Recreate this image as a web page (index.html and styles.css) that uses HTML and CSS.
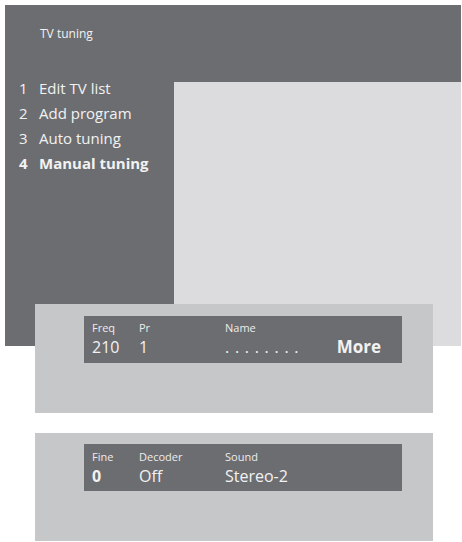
FILE: index.html
```html
<!DOCTYPE html>
<html>
<head>
<meta charset="utf-8">
<link rel="stylesheet" href="styles.css">
</head>
<body>
<div class="screen">
  <div class="title">TV tuning</div>
  <div class="main">
    <ol class="menu">
      <li><span class="num">1</span>Edit TV list</li>
      <li><span class="num">2</span>Add program</li>
      <li><span class="num">3</span>Auto tuning</li>
      <li class="active"><span class="num">4</span>Manual tuning</li>
    </ol>
    <div class="panel"></div>
  </div>
</div>
<div class="cards">
  <div class="card card-first">
    <div class="strip">
      <div class="label">Freq</div>
      <div class="label">Pr</div>
      <div class="label">Name</div>
      <div class="label"></div>
      <div class="value">210</div>
      <div class="value">1</div>
      <div class="value dots">........</div>
      <div class="value more">More</div>
    </div>
  </div>
  <div class="card card-second">
    <div class="strip">
      <div class="label">Fine</div>
      <div class="label">Decoder</div>
      <div class="label">Sound</div>
      <div class="label"></div>
      <div class="value bold">0</div>
      <div class="value">Off</div>
      <div class="value">Stereo-2</div>
      <div class="value"></div>
    </div>
  </div>
</div>
</body>
</html>
```

FILE: styles.css
```css
* { box-sizing: border-box; }
html, body { margin: 0; padding: 0; background: #ffffff; }
body {
  font-family: "Open Sans", "Noto Sans", sans-serif;
  color: #f2f2f2;
  width: 462px;
  height: 542px;
  overflow: hidden;
}
.screen {
  margin: 5px 1px 0 5px;
  width: 456px;
  height: 341px;
  background: #6c6d71;
  display: flex;
  flex-direction: column;
}
.title {
  height: 66px;
  padding: 21px 0 0 35px;
  font-size: 12px;
  line-height: 16px;
}
.main {
  flex: 1;
  display: flex;
}
.menu {
  list-style: none;
  margin: 0;
  padding: 4.7px 0 0 14px;
  width: 169px;
  font-size: 15px;
  line-height: 25px;
}
.menu li { display: flex; white-space: nowrap; }
.menu .num { width: 20px; }
.menu .active { font-weight: 700; }
.panel {
  flex: 1;
  margin-top: 11px;
  background: #dcdcde;
}
.cards {
  margin-left: 35px;
  width: 398px;
  position: relative;
  margin-top: -42px;
}
.card {
  background: #c6c7c9;
  padding: 12px 31px 0 49px;
}
.card-first { height: 109px; }
.card-second { height: 108px; margin-top: 20px; padding-top: 11px; }
.strip {
  background: #6c6d71;
  height: 47px;
  padding: 5px 21px 0 8px;
  display: grid;
  grid-template-columns: 47px 86px 1fr auto;
  grid-template-rows: 14px 24px;
}
.card-second .strip { padding-top: 6px; }
.label {
  font-size: 11px;
  line-height: 14px;
  color: #ececec;
}
.value {
  font-size: 16px;
  line-height: 24px;
  white-space: nowrap;
}
.bold { font-weight: 700; }
.dots { letter-spacing: 5.7px; }
.more {
  font-size: 17px;
  font-weight: 700;
}
```
